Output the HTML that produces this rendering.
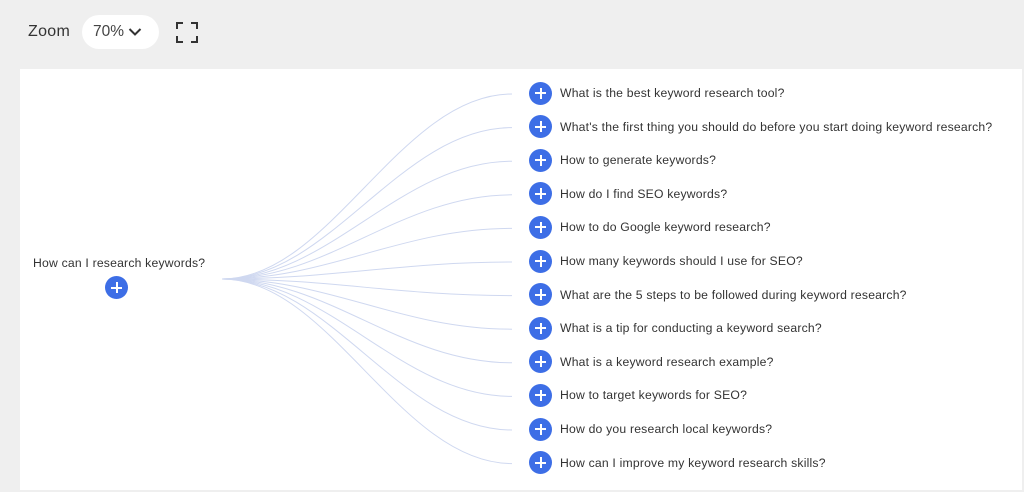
<!DOCTYPE html>
<html><head><meta charset="utf-8"><style>
body{margin:0;width:1024px;height:492px;background:#efefef;font-family:"Liberation Sans",sans-serif;position:relative;overflow:hidden;color:#333}
.panel{position:absolute;left:20px;top:69px;width:1002px;height:421px;background:#fff}
.zoom{position:absolute;left:28px;top:23px;font-size:16px;color:#333;letter-spacing:0.3px}
.pill{position:absolute;left:82px;top:15px;width:77px;height:34px;border-radius:17px;background:#fff;font-size:15.5px;color:#444}
.pill span{position:absolute;left:11px;top:8px}
.btn{position:absolute;width:23px;height:23px;border-radius:50%;background:#3d6ee6}
.btn:before{content:"";position:absolute;left:6px;top:10.5px;width:11px;height:2px;background:#fff}
.btn:after{content:"";position:absolute;left:10.5px;top:6px;width:2px;height:11px;background:#fff}
.t{position:absolute;font-size:12.2px;letter-spacing:0.2px;color:#333;white-space:nowrap}
</style></head><body>
<div class="zoom">Zoom</div>
<div class="pill"><span>70%</span><svg style="position:absolute;left:46px;top:12px" width="14" height="10"><path d="M1.5 2 L7 7.5 L12.5 2" fill="none" stroke="#333" stroke-width="2"/></svg></div>
<svg style="position:absolute;left:176px;top:22px" width="22" height="21"><path d="M1 7V1H7M15 1H21V7M21 14V20H15M7 20H1V14" fill="none" stroke="#333" stroke-width="2"/></svg>
<div class="panel"></div>
<svg style="position:absolute;left:0;top:0" width="1024" height="492" id="s"></svg>
<div class="t" style="left:33px;top:256px">How can I research keywords?</div>
<div class="btn" style="left:105px;top:276px"></div>
<div id="items"></div>
<script>
var q=["What is the best keyword research tool?","What's the first thing you should do before you start doing keyword research?","How to generate keywords?","How do I find SEO keywords?","How to do Google keyword research?","How many keywords should I use for SEO?","What are the 5 steps to be followed during keyword research?","What is a tip for conducting a keyword search?","What is a keyword research example?","How to target keywords for SEO?","How do you research local keywords?","How can I improve my keyword research skills?"];
var h="",p="";
q.forEach(function(s,i){var y=93+i*33.6;
h+='<div class="btn" style="left:529px;top:'+(y-11.5)+'px"></div><div class="t" style="left:560px;top:'+(y-7)+'px">'+s+'</div>';
p+='<path d="M222 279 C330 279 400 '+(y+1)+' 512 '+(y+1)+'" fill="none" stroke="#cfd8f0" stroke-width="1"/>';});
document.getElementById("items").innerHTML=h;document.getElementById("s").innerHTML=p;
</script>
</body></html>
